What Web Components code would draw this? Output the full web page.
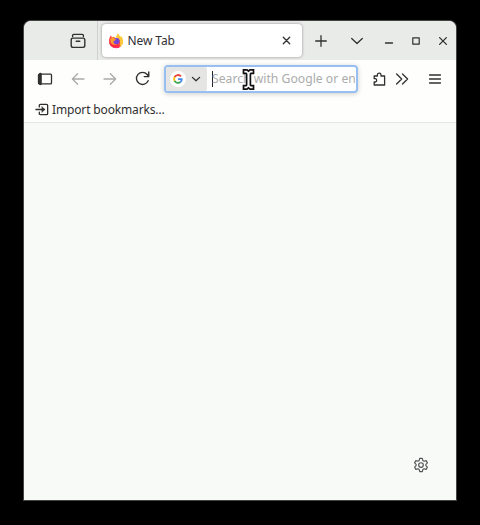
<!DOCTYPE html>
<html lang="en"><head><meta charset="utf-8"><title>New Tab</title>
<style>
html,body{margin:0;height:100%;background:#000}
body{font-family:"Noto Sans",sans-serif;color:#303030}
</style></head><body>
<browser-window></browser-window>
<script>
function define(name, html){
  const t=document.createElement('template'); t.innerHTML=html;
  customElements.define(name, class extends HTMLElement{
    constructor(){super();this.attachShadow({mode:'open'}).append(t.content.cloneNode(true));}
  });
}
const G={
 archive:'<path d="M2.6 3.6V2.6Q2.6 1.4 3.8 1.4H12.2Q13.4 1.4 13.4 2.6V3.6M1.2 7Q1.2 5.1 2.9 5.1H13.1Q14.8 5.1 14.8 7V12.6Q14.8 14.4 13 14.4H3Q1.2 14.4 1.2 12.6ZM6.2 8.2H9.8"/>',
 close:'<path d="M4.6 4.6L11.4 11.4M11.4 4.6L4.6 11.4"/>',
 plus:'<path d="M8 2.7V13.3M2.7 8H13.3"/>',
 chevron:'<path d="M2.7 5.5L8 10.5L13.3 5.5"/>',
 small:'<path d="M4.4 6.4L8 9.8L11.6 6.4"/>',
 min:'<path d="M4.5 10H11.5"/>',
 max:'<path d="M4.8 4.8H11.2V11.2H4.8Z"/>',
 sidebar:'<path d="M2.4 3.1H13.6Q14.5 3.1 14.5 4V12Q14.5 12.9 13.6 12.9H2.4Q1.5 12.9 1.5 12V4Q1.5 3.1 2.4 3.1Z"/><path d="M3.4 3.2V12.8" stroke-width="2.8"/>',
 back:'<path d="M14 8H2.6M7.6 2.8L2.4 8L7.6 13.2"/>',
 forward:'<path d="M2 8H13.4M8.4 2.8L13.6 8L8.4 13.2"/>',
 reload:'<path d="M13.3 10.1A5.7 5.7 0 1 1 12.4 4.2L13.5 5.6M13.9 1.9V6.2H9.6"/>',
 puzzle:'<path d="M3.2 5H6.4V4A1.8 1.8 0 0 1 10 4V5H13.6V14H3.2V11H4.4A1.7 1.7 0 0 0 4.4 7.7H3.2Z"/>',
 more:'<path d="M2.6 3L7.7 8L2.6 13M8.5 3L13.6 8L8.5 13"/>',
 menu:'<path d="M2.5 4H13.5M2.5 8H13.5M2.5 12H13.5"/>',
 enter:'<path d="M4.6 5.2V3.6Q4.6 2.5 5.7 2.5H12.4Q13.5 2.5 13.5 3.6V12.4Q13.5 13.5 12.4 13.5H5.7Q4.6 13.5 4.6 12.4V10.8M1 8H10"/><path d="M7.5 5L10.5 8L7.5 11Z" fill="currentColor" stroke-width=".5"/>',
 gear:'<circle cx="8" cy="8" r="2.3"/><path d="M6.7 1.4H9.3L9.8 3.4L11.1 4.2L13.1 3.6L14.4 5.9L12.9 7.3V8.7L14.4 10.1L13.1 12.4L11.1 11.8L9.8 12.6L9.3 14.6H6.7L6.2 12.6L4.9 11.8L2.9 12.4L1.6 10.1L3.1 8.7V7.3L1.6 5.9L2.9 3.6L4.9 4.2L6.2 3.4Z"/>',
 google:'<g fill="none" stroke-width="2.4" stroke-linecap="butt"><path stroke="#e94335" d="M12 4.5A5.2 5.2 0 0 0 3.4 5.5"/><path stroke="#fbbc05" d="M3.5 5.4A5.2 5.2 0 0 0 3.5 10.6"/><path stroke="#34a853" d="M3.4 10.5A5.2 5.2 0 0 0 11.3 12"/><path stroke="#4285f4" d="M11.2 12.1A5.2 5.2 0 0 0 13.1 8.2H8.1"/></g>',
 firefox:'<g stroke="none"><path fill="#ff4545" d="M1 7.6C1 5.1 2.1 3.5 3.1 2.2L3.6 4.2L5.8 3.8L8.4 6L12.5 4L15 8.3A7 7 0 0 1 1 7.6Z"/><path fill="#ff293e" d="M1.1 8.5Q5 13 10 12L13.4 12.8A7 7 0 0 1 1.1 8.5Z"/><path fill="#f6308c" d="M4 13.5Q8 14.5 12 13.6Q8 16.3 4 13.5Z"/><path fill="#ffca38" d="M9.3 .5C11 1.3 11.8 2.8 12.2 4L13 2.8C14.6 4.5 15.3 6.9 15 9.2C14.6 11.6 13.2 13.2 11.4 14Q12.8 10.8 11.7 7.5Q10.8 4.8 7.4 4.2Q9.2 2.7 9.3 .5Z"/><path fill="#ff9a32" d="M2.2 6.4Q3.3 3.7 6.5 4L8.2 6.1L5.7 7.7Q5 10.8 8.8 11.1Q4.4 13.1 2.8 9.4Z"/><circle cx="8.5" cy="8.1" r="3.1" fill="#7543d6"/><path fill="#ff9d2d" d="M4.6 6L8.3 6.2Q8 7.4 6.2 7.7L5 9Z"/></g>'
};
customElements.define('ui-icon', class extends HTMLElement{
  constructor(){super();this.attachShadow({mode:'open'});}
  connectedCallback(){
    this.shadowRoot.innerHTML=`<style>:host{display:flex;flex:none;align-items:center;justify-content:center;width:var(--cell,16px)}svg{display:block;flex:none;width:var(--size,16px);height:var(--size,16px);fill:none;stroke:currentColor;stroke-width:var(--stroke,1.3);stroke-linecap:round;stroke-linejoin:round}</style><svg viewBox="0 0 16 16" aria-hidden="true">${G[this.getAttribute('name')]}</svg>`;
  }
});
define('browser-tab',`<style>
:host{display:flex;flex:none;align-items:center;box-sizing:border-box;width:200px;height:33px;padding:0 7px 0 6px;border-radius:4px;background:#fff;box-shadow:0 0 3px #0006;font-size:12px;color:#303035}
.t{flex:1;margin-left:4px;white-space:nowrap;letter-spacing:-.1px}
.x{--cell:16px;--size:15px;--stroke:1.4}
</style><ui-icon name="firefox"></ui-icon><div class="t"><slot></slot></div><ui-icon class="x" name="close"></ui-icon>`);
define('tab-strip',`<style>
:host{display:flex;align-items:center;height:39px;background:#e9ebe9}
.a{--cell:16px;--stroke:1.4;margin-left:45.5px}.s{flex:none;width:1px;height:39px;background:#cfd0cf;margin:0 3.5px 0 11.5px}
.p{--cell:38px}.c{--cell:35px}.n{--cell:29px;--stroke:1.3}.m{--cell:25px;--stroke:1.2}.k{--cell:29px;--stroke:1.3}
</style><ui-icon class="a" name="archive"></ui-icon><span class="s"></span><browser-tab>New Tab</browser-tab><ui-icon class="p" name="plus"></ui-icon><ui-icon class="c" name="chevron"></ui-icon><ui-icon class="n" name="min"></ui-icon><ui-icon class="m" name="max"></ui-icon><ui-icon class="k" name="close"></ui-icon>`);
define('address-bar',`<style>
:host{display:flex;position:relative;box-sizing:border-box;width:194px;height:28px;border:2px solid #97bff1;border-radius:4px;background:#fff;box-shadow:0 1px 5px #0003}
.e{display:flex;align-items:center;width:41px;background:#e5e6e4;border-radius:2px;flex:none}
.g{display:flex;width:16px;height:16px;border-radius:50%;background:#fff;align-items:center;justify-content:center;margin-left:4px;--size:12px}
.v{--cell:16px;--stroke:1.3;margin-left:2px}
.f{display:flex;align-items:center;flex:1;min-width:0;overflow:hidden;margin:0 1px 0 5px;font-size:12.2px;color:#acacac;white-space:nowrap}
.caret{width:1px;height:16px;background:#222;flex:none;margin-right:-1px}
.cur{position:absolute;left:76px;top:1px;width:13px;height:23px;overflow:visible}
</style><div class="e"><span class="g"><ui-icon name="google"></ui-icon></span><ui-icon class="v" name="small"></ui-icon></div>
<div class="f"><span class="caret"></span><span class="ph"><slot></slot></span></div>
<svg class="cur" viewBox="0 0 13 23"><path d="M1.5 1.8H5L6.5 3.2L8 1.8H11.5V5.3H9L8.4 6V17L9 17.7H11.5V21.2H8L6.5 19.8L5 21.2H1.5V17.7H4L4.6 17V6L4 5.3H1.5Z" fill="#fff" stroke="#111" stroke-width="1.7"/></svg>`);
define('nav-bar',`<style>
:host{display:flex;align-items:center;height:37px}
.b{--cell:32.5px}.b:first-of-type{margin-left:5px}.d{color:#aaa}
address-bar{margin-left:5px}.z{--cell:22px;margin-left:10px}.m{--cell:24px}.h{--cell:41px}
.r{--size:17px}
</style><ui-icon class="b" name="sidebar"></ui-icon><ui-icon class="b d" name="back"></ui-icon><ui-icon class="b d" name="forward"></ui-icon><ui-icon class="b r" name="reload"></ui-icon><address-bar>Search with Google or enter address</address-bar><ui-icon class="z" name="puzzle"></ui-icon><ui-icon class="m" name="more"></ui-icon><ui-icon class="h" name="menu"></ui-icon>`);
define('bookmarks-bar',`<style>
:host{display:flex;align-items:center;height:25px;padding-left:10px;gap:2px;font-size:12px;letter-spacing:-.15px;border-bottom:1px solid #e4e7e5}
ui-icon{--size:15px;--stroke:1.4}
</style><ui-icon name="enter"></ui-icon><span><slot></slot></span>`);
define('new-tab-page',`<style>
:host{display:flex;flex:1;align-items:flex-end;justify-content:flex-end;padding:0 27px 27px 0;background:#f8faf8;color:#505455}
ui-icon{--stroke:1.15}
</style><ui-icon name="gear"></ui-icon>`);
define('browser-window',`<style>
:host{display:flex;flex-direction:column;box-sizing:border-box;height:525px;padding:21px 24px 25px}
.w{display:flex;flex-direction:column;flex:1;border-radius:7px 7px 0 0;overflow:hidden;background:#fefefd;box-shadow:0 0 0 1px #444}
</style><div class="w"><tab-strip></tab-strip><nav-bar></nav-bar><bookmarks-bar>Import bookmarks…</bookmarks-bar><new-tab-page></new-tab-page></div>`);
</script></body></html>
